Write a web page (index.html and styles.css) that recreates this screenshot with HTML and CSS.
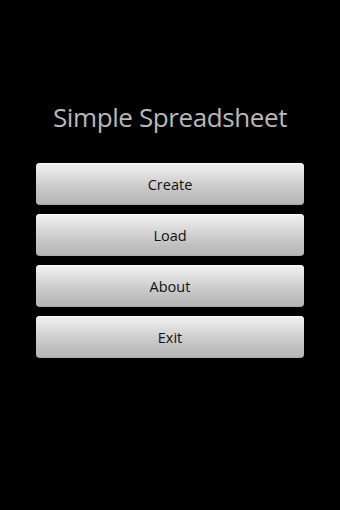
FILE: index.html
```html
<!DOCTYPE html>
<html>
<head>
<meta charset="utf-8">
<link rel="stylesheet" href="styles.css">
</head>
<body>
<main class="screen">
  <h1 class="title">Simple Spreadsheet</h1>
  <div class="menu">
    <button class="btn">Create</button>
    <button class="btn">Load</button>
    <button class="btn">About</button>
    <button class="btn">Exit</button>
  </div>
</main>
</body>
</html>
```
FILE: styles.css
```css
html, body {
  margin: 0;
  padding: 0;
  background: #000;
  width: 340px;
  height: 510px;
  overflow: hidden;
}
.screen {
  display: flex;
  flex-direction: column;
  align-items: center;
  padding-top: 99px;
  font-family: "Open Sans", "DejaVu Sans", sans-serif;
}
.title {
  margin: 0;
  height: 36px;
  line-height: 36px;
  font-size: 26px;
  font-weight: normal;
  color: #b9b9b9;
  letter-spacing: -0.4px;
}
.menu {
  margin-top: 28px;
  display: flex;
  flex-direction: column;
  gap: 9px;
  width: 268px;
}
.btn {
  height: 42px;
  border: none;
  border-radius: 4px;
  padding: 0;
  font-family: "Open Sans", "DejaVu Sans", sans-serif;
  font-size: 14.5px;
  color: #111;
  background: linear-gradient(to bottom, #f2f2f2 0%, #e4e4e4 20%, #cfcfcf 50%, #bdbdbd 80%, #b8b8b8 95%, #a8a8a8 100%);
  box-shadow: inset 0 1px 0 #fafafa;
}
```
